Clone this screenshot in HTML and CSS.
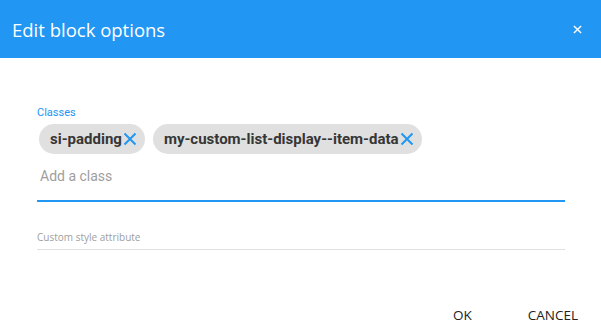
FILE: index.html
```html
<!DOCTYPE html>
<html lang="en">
<head>
  <meta charset="UTF-8">
  <title>Edit block options</title>
  <link rel="stylesheet" href="styles.css">
</head>
<body>
  <div class="dialog">
    <div class="header">
      <div class="title">Edit block options</div>
      <button class="close"><svg viewBox="0 0 10 10"><path d="M1 1L9 9M9 1L1 9"/></svg></button>
    </div>

    <div class="content">
      <div class="field classes">
        <div class="label">Classes</div>
        <div class="chips">
          <span class="chip">si-padding<svg viewBox="0 0 14 14"><path d="M1.5 1.5L12.5 12.5M12.5 1.5L1.5 12.5"/></svg></span>
          <span class="chip">my-custom-list-display--item-data<svg viewBox="0 0 14 14"><path d="M1.5 1.5L12.5 12.5M12.5 1.5L1.5 12.5"/></svg></span>
        </div>
        <div class="input">Add a class</div>
      </div>

      <div class="field style">
        <div class="input small">Custom style attribute</div>
      </div>
    </div>

    <div class="actions">
      <button>OK</button>
      <button>CANCEL</button>
    </div>
  </div>
</body>
</html>
```

FILE: styles.css
```css
body {
  margin: 0;
  background: #ffffff;
  font-family: 'Segoe UI', 'Open Sans', 'Noto Sans', sans-serif;
}

.dialog {
  width: 601px;
  height: 333px;
  display: flex;
  flex-direction: column;
}

.header {
  height: 58px;
  background-color: #2196f3;
  color: white;
  display: flex;
  align-items: center;
  justify-content: space-between;
  padding: 0 19px 0 12px;
}

.title {
  font-size: 18.5px;
  margin-top: 1px;
}

.close {
  display: flex;
  background: none;
  border: none;
  padding: 0;
  cursor: pointer;
}

.close svg {
  width: 9px;
  height: 9px;
  fill: none;
  stroke: white;
  stroke-width: 1.6;
}

.content {
  padding: 48px 36px 0 37px;
}

.label {
  color: #2196f3;
  font-family: Roboto, sans-serif;
  font-size: 11px;
  line-height: 14px;
}

.chips {
  display: flex;
  gap: 8px;
  margin-top: 4px;
  padding-left: 2px;
}

.chip {
  display: flex;
  align-items: center;
  height: 30px;
  padding: 0 8px 0 11px;
  border-radius: 15px;
  background-color: #e0e0e0;
  color: #363636;
  font-family: Roboto, sans-serif;
  font-weight: bold;
  font-size: 15px;
}

.chip svg {
  width: 14px;
  height: 14px;
  margin-left: 1px;
  fill: none;
  stroke: #2196f3;
  stroke-width: 2;
}

.input {
  font-family: Roboto, sans-serif;
  font-size: 14px;
  color: #9e9e9e;
  padding: 14px 3px 16px;
  border-bottom: 2px solid #2196f3;
}

.style {
  margin-top: 28px;
}

.input.small {
  font-family: 'Segoe UI', 'Open Sans', sans-serif;
  font-size: 10px;
  color: #9e9e9e;
  padding: 0 0 5px;
  border-bottom: 1px solid #e0e0e0;
}

.actions {
  margin-top: auto;
  display: flex;
  justify-content: flex-end;
  gap: 56px;
  padding: 0 23px 9px 0;
}

.actions button {
  background: none;
  border: none;
  font-family: 'Segoe UI', 'Open Sans', sans-serif;
  font-size: 13.5px;
  color: #222;
  padding: 0;
  cursor: pointer;
}
```
